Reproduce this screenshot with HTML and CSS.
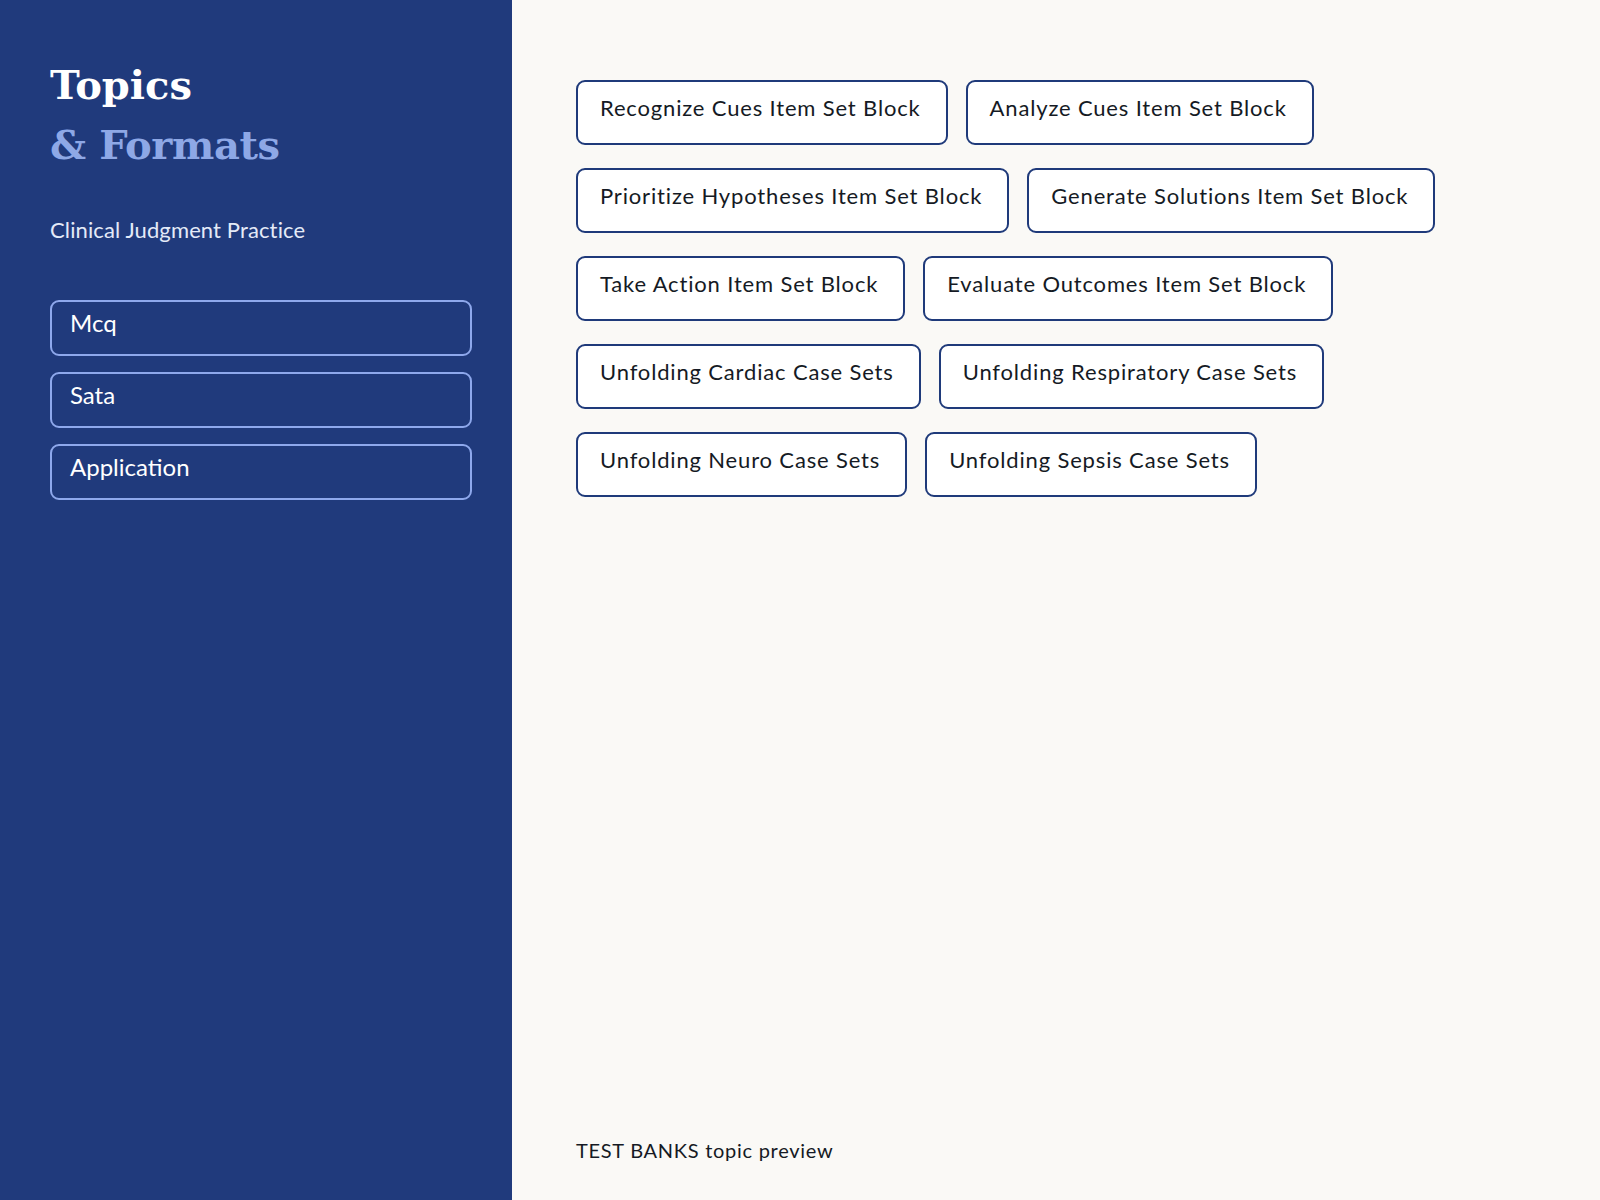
FILE: index.html
```html
<!DOCTYPE html>
<html lang="en">
<head>
<meta charset="utf-8">
<title>Topics &amp; Formats</title>
<link rel="stylesheet" href="styles.css">
</head>
<body>
<div class="page">
  <aside class="sidebar">
    <h1 class="title"><span class="title-main">Topics</span><span class="title-accent">&amp; Formats</span></h1>
    <p class="subtitle">Clinical Judgment Practice</p>
    <nav class="formats">
      <div class="format">Mcq</div>
      <div class="format">Sata</div>
      <div class="format">Application</div>
    </nav>
  </aside>
  <main class="main">
    <div class="chips">
      <div class="chip">Recognize Cues Item Set Block</div>
      <div class="chip">Analyze Cues Item Set Block</div>
      <div class="chip">Prioritize Hypotheses Item Set Block</div>
      <div class="chip">Generate Solutions Item Set Block</div>
      <div class="chip">Take Action Item Set Block</div>
      <div class="chip">Evaluate Outcomes Item Set Block</div>
      <div class="chip">Unfolding Cardiac Case Sets</div>
      <div class="chip">Unfolding Respiratory Case Sets</div>
      <div class="chip">Unfolding Neuro Case Sets</div>
      <div class="chip">Unfolding Sepsis Case Sets</div>
    </div>
    <p class="footer">TEST BANKS topic preview</p>
  </main>
</div>
</body>
</html>
```

FILE: styles.css
```css
* { box-sizing: border-box; }
html, body { margin: 0; padding: 0; }
body {
  font-family: Lato, "Noto Sans", sans-serif;
  background: #faf9f6;
  color: #151a24;
}
.page {
  display: flex;
  height: 100vh;
  min-height: 1200px;
}
.sidebar {
  width: 512px;
  flex: 0 0 512px;
  background: #203a7c;
  padding: 55px 40px 0 50px;
  color: #ffffff;
}
.title {
  margin: 0;
  font-family: "DejaVu Serif", Georgia, serif;
  font-weight: 700;
  font-size: 40px;
  line-height: 60px;
  display: flex;
  flex-direction: column;
}
.title-main { color: #ffffff; }
.title-accent { color: #8ea8e6; letter-spacing: -0.4px; }
.subtitle {
  margin: 42px 0 0;
  font-size: 22px;
  line-height: 26px;
  letter-spacing: 0.12px;
  color: #e4eaf8;
}
.formats {
  margin-top: 57px;
  display: flex;
  flex-direction: column;
  gap: 16px;
}
.format {
  border: 2px solid #8ea8ec;
  border-radius: 9px;
  padding: 6px 18px 17px;
  font-size: 24px;
  line-height: 29px;
  color: #ffffff;
}
.main {
  flex: 1;
  display: flex;
  flex-direction: column;
  padding: 80px 64px 38px 64px;
}
.chips {
  display: flex;
  flex-wrap: wrap;
  column-gap: 18px;
  row-gap: 23px;
  max-width: 980px;
}
.chip {
  border: 2px solid #1f3a7a;
  border-radius: 9px;
  padding: 13px 25px 22px 22px;
  font-size: 22px;
  line-height: 26px;
  letter-spacing: 0.84px;
  color: #151a24;
  background: #ffffff;
  white-space: nowrap;
}
.footer {
  margin: auto 0 0;
  font-size: 20px;
  line-height: 24px;
  letter-spacing: 0.72px;
  color: #151a24;
}
```
